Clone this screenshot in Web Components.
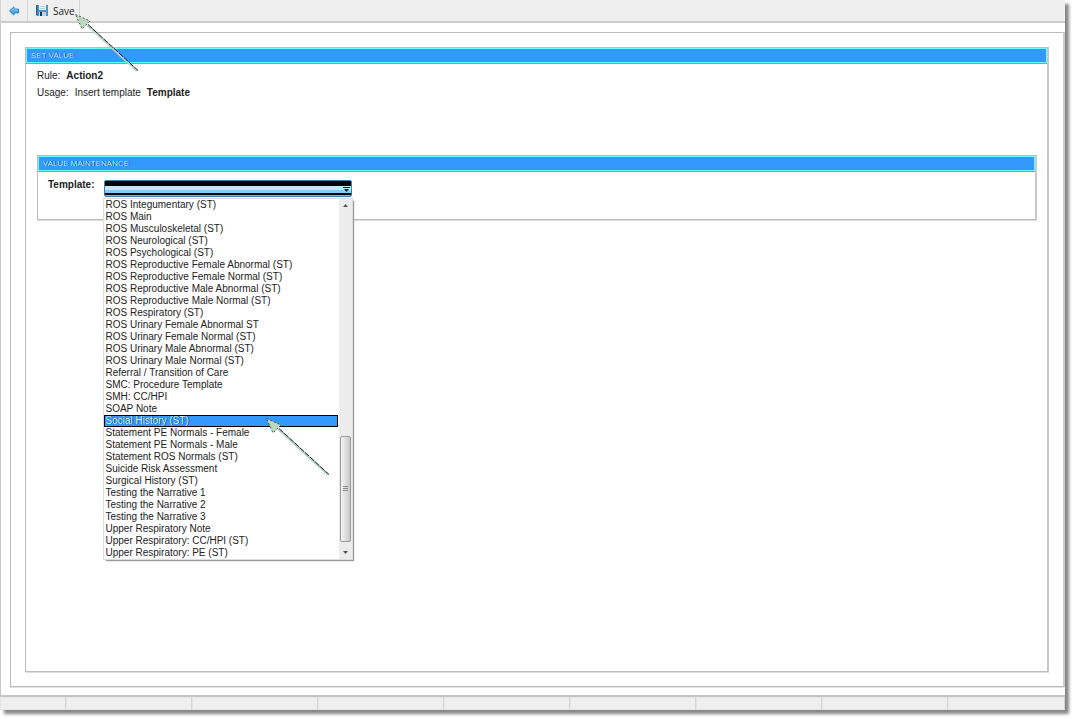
<!DOCTYPE html>
<html lang="en">
<head>
  <meta charset="utf-8">
  <title>Set Value</title>
  <style>
    html,
    body {
      height: 100%;
      margin: 0;
    }

    body {
      box-sizing: border-box;
      padding: 0 9px 9px 0;
      background: #fff;
      color: #222;
      font: 10px/12px "Liberation Sans", Arial, sans-serif;
      overflow: hidden;
    }

    .info {
      margin: 0;
      padding: 4px 11px 0;
      line-height: 17px;
    }

    .info div {
      display: flex;
      gap: 6px;
    }

    .info dt,
    .info dd {
      margin: 0;
    }

    .value-panel {
      margin: 54px 10px 0 11px;
    }
  </style>
</head>
<body>
  <app-window>
    <tool-bar slot="toolbar"></tool-bar>
    <title-panel heading="SET VALUE" fill>
      <dl class="info">
        <div><dt>Rule:</dt><dd><b>Action2</b></dd></div>
        <div><dt>Usage:</dt><dd>Insert template</dd><dd><b>Template</b></dd></div>
      </dl>
      <title-panel class="value-panel" heading="VALUE MAINTENANCE">
        <template-picker label="Template:" value="Social History (ST)"></template-picker>
      </title-panel>
    </title-panel>
    <status-bar slot="status" cells="9"></status-bar>
  </app-window>

  <script>
    // window frame: toolbar on top, bordered page, status bar
    customElements.define(
      'app-window',
      class extends HTMLElement {
        constructor() {
          super();
          const shadowRoot = this.attachShadow({ mode: 'open' });
          shadowRoot.innerHTML = `
            <style>
              :host {
                box-sizing: border-box;
                display: flex;
                flex-direction: column;
                height: 100%;
                background: #fff;
                box-shadow: 4px 4px 3px 0 #888;
              }

              main {
                flex: 1;
                display: flex;
                padding: 9px 0 8px 9px;
                border-left: 1px solid #c8c8c8;
                border-bottom: 2px solid #c4c4c4;
              }

              .page {
                flex: 1;
                display: flex;
                padding: 14px;
                border: 1px solid #bbb;
                border-right: 2px solid #ccc;
                box-shadow: 0 1px #e2e2e2;
              }
            </style>
            <slot name="toolbar"></slot>
            <main><div class="page"><slot></slot></div></main>
            <slot name="status"></slot>
          `;
        }
      }
    );

    customElements.define(
      'tool-bar',
      class extends HTMLElement {
        constructor() {
          super();
          const shadowRoot = this.attachShadow({ mode: 'open' });
          shadowRoot.innerHTML = `
            <style>
              :host {
                display: flex;
                height: 21px;
                background: #efefef;
                border-left: 1px solid #d4d4d4;
                border-bottom: 2px solid #ccc;
              }

              button {
                display: flex;
                align-items: center;
                gap: 5px;
                margin: 0;
                padding: 0 8px;
                border: 0;
                border-right: 1px solid #d4d4d4;
                background: none;
                color: #222;
                font: 10px/12px "Open Sans", sans-serif;
              }

              .save {
                position: relative;
                padding: 0 4px 0 8px;
              }

              pointer-arrow {
                left: 47px;
                top: 14px;
              }
            </style>
            <button type="button" aria-label="Back">
              <svg width="10" height="10" viewBox="0 0 10 10">
                <path d="M0.5 5L5 0.8V3H9.5V7H5V9.2Z" fill="#45a8ea" stroke="#2179bd" stroke-width="0.8"/>
                <path d="M2.5 4.5L4.5 3V4H8.5" fill="none" stroke="#a5dcfb" stroke-width="0.8"/>
              </svg>
            </button>
            <button type="button" class="save">
              <svg width="12" height="11" viewBox="0 0 12 11">
                <path d="M0 0H12V11H1L0 10Z" fill="#4d94cc"/>
                <path d="M0 0H1.5V10H0Z" fill="#2c5f8c"/>
                <path d="M3 0H10V5H3Z" fill="#eef6f4"/>
                <path d="M4 1.5H9M4 3.5H9" stroke="#a9cbb9" stroke-width="0.8"/>
                <path d="M3 7H10V11H3Z" fill="#c9d4df"/>
                <path d="M4 7H6V11H4Z" fill="#183652"/>
              </svg>
              Save
              <pointer-arrow></pointer-arrow>
            </button>
          `;
        }
      }
    );

    // callout arrow, its tip sits at the host's top left corner
    customElements.define(
      'pointer-arrow',
      class extends HTMLElement {
        constructor() {
          super();
          const shadowRoot = this.attachShadow({ mode: 'open' });
          shadowRoot.innerHTML = `
            <style>
              :host {
                position: absolute;
                z-index: 2;
                pointer-events: none;
              }

              svg {
                display: block;
              }
            </style>
            <svg width="64" height="58" viewBox="0 0 64 58" aria-hidden="true">
              <path d="M12 11L62 57" stroke="#b5d5cf" stroke-width="2"/>
              <path d="M13 10.5L63 56.5" stroke="#111" stroke-width="1" stroke-dasharray="6 1"/>
              <path d="M0.5 0.5L15 7L7 15Z" fill="#bcd8bc"/>
              <path d="M0.5 0.5L15 7L7 15Z" fill="none" stroke="#333" stroke-width="0.8" stroke-dasharray="2 2"/>
            </svg>
          `;
        }
      }
    );

    customElements.define(
      'title-panel',
      class extends HTMLElement {
        constructor() {
          super();
          const shadowRoot = this.attachShadow({ mode: 'open' });
          shadowRoot.innerHTML = `
            <style>
              :host {
                display: block;
                box-sizing: border-box;
                border: 1px solid #bbb;
                border-right: 2px solid #c8c8c8;
                box-shadow: 0 1px #ddd;
              }

              :host([fill]) {
                flex: 1;
              }

              h2 {
                margin: 0;
                padding: 0 4px;
                border: 1px solid #66ffff;
                background: #3399ff;
                box-shadow: 0 1px #7f9fc0;
                color: #b8f4ff;
                font-size: 8px;
                font-weight: normal;
                line-height: 13px;
                text-shadow: 1px 0 #0d3c66;
              }
            </style>
            <h2></h2>
            <slot></slot>
          `;
          shadowRoot.querySelector('h2').textContent = this.getAttribute('heading');
        }
      }
    );

    const TEMPLATES = [
      'ROS Integumentary (ST)',
      'ROS Main',
      'ROS Musculoskeletal (ST)',
      'ROS Neurological (ST)',
      'ROS Psychological (ST)',
      'ROS Reproductive Female Abnormal (ST)',
      'ROS Reproductive Female Normal (ST)',
      'ROS Reproductive Male Abnormal (ST)',
      'ROS Reproductive Male Normal (ST)',
      'ROS Respiratory (ST)',
      'ROS Urinary Female Abnormal ST',
      'ROS Urinary Female Normal (ST)',
      'ROS Urinary Male Abnormal (ST)',
      'ROS Urinary Male Normal (ST)',
      'Referral / Transition of Care',
      'SMC: Procedure Template',
      'SMH: CC/HPI',
      'SOAP Note',
      'Social History (ST)',
      'Statement PE Normals - Female',
      'Statement PE Normals - Male',
      'Statement ROS Normals (ST)',
      'Suicide Risk Assessment',
      'Surgical History (ST)',
      'Testing the Narrative 1',
      'Testing the Narrative 2',
      'Testing the Narrative 3',
      'Upper Respiratory Note',
      'Upper Respiratory: CC/HPI (ST)',
      'Upper Respiratory: PE (ST)'
    ];

    customElements.define(
      'template-picker',
      class extends HTMLElement {
        constructor() {
          super();
          const shadowRoot = this.attachShadow({ mode: 'open' });
          shadowRoot.innerHTML = `
            <style>
              :host {
                display: flex;
                gap: 9px;
                padding: 8px 10px 22px;
              }

              label {
                font-weight: bold;
                line-height: 12px;
              }

              .field {
                position: relative;
                width: 248px;
                margin-top: 1px;
              }

              .combo {
                position: relative;
                display: block;
              }

              select {
                display: block;
                box-sizing: border-box;
                width: 100%;
                height: 17px;
                margin: 0;
                padding: 0;
                appearance: none;
                border: 1px solid #3c7fb1;
                border-radius: 2px;
                outline: 0;
                background: linear-gradient(#000 5px, #c4e9ff 5px 9px, #8cc8fb 9px 12px, #000 12px 14px, #66bfff 14px);
              }

              .combo svg {
                position: absolute;
                right: 2px;
                top: 7px;
              }

              .popup {
                position: absolute;
                z-index: 1;
                top: 19px;
                left: 0;
                right: 0;
                display: flex;
                background: #fff;
                box-shadow: 0 0 0 1px #ddd, 2px 2px 1px #999;
              }

              ul {
                flex: 1;
                margin: 0;
                padding: 0 1px 0 0;
                list-style: none;
              }

              li {
                padding: 0 2px;
                line-height: 12px;
                white-space: nowrap;
              }

              li[aria-selected="true"] {
                background: #3399ff;
                box-shadow: inset 0 0 0 1px #000;
                color: #d4f3ff;
                text-shadow: 1px 0 #123d66;
              }

              .scroll {
                display: flex;
                flex-direction: column;
                align-items: center;
                width: 13px;
                background: #ececec;
              }

              .scroll svg {
                display: block;
                padding: 5px 0;
              }

              .thumb {
                box-sizing: border-box;
                display: grid;
                place-items: center;
                width: 11px;
                height: 106px;
                margin: auto 0 4px;
                border: 1px solid #999;
                border-radius: 2px;
                background: linear-gradient(90deg, #f5f5f5, #dedede 50%, #c8c8c8);
              }

              pointer-arrow {
                left: 162px;
                top: 219px;
              }
            </style>
            <label for="template"></label>
            <div class="field">
              <div class="combo">
                <select id="template"><option></option></select>
                <svg width="7" height="6" viewBox="0 0 7 6"><path d="M0 0H7V1H0ZM1 2H6L3.5 5Z" fill="#123"/></svg>
              </div>
              <div class="popup">
                <ul role="listbox"></ul>
                <div class="scroll">
                  <svg width="5" height="3" viewBox="0 0 5 3"><path d="M0 3L2.5 0L5 3Z" fill="#555"/></svg>
                  <div class="thumb">
                    <svg width="5" height="6" viewBox="0 0 5 6"><path d="M0 .5H5M0 2.5H5M0 4.5H5" stroke="#888"/></svg>
                  </div>
                  <svg width="5" height="3" viewBox="0 0 5 3"><path d="M0 0L2.5 3L5 0Z" fill="#555"/></svg>
                </div>
                <pointer-arrow></pointer-arrow>
              </div>
            </div>
          `;
          shadowRoot.querySelector('label').textContent = this.getAttribute('label');
          const list = shadowRoot.querySelector('ul');
          list.setAttribute('aria-label', 'Templates');
          TEMPLATES.forEach(name => {
            const item = document.createElement('li');
            item.textContent = name;
            item.setAttribute('role', 'option');
            item.setAttribute('aria-selected', name === this.getAttribute('value'));
            list.appendChild(item);
          });
        }
      }
    );

    customElements.define(
      'status-bar',
      class extends HTMLElement {
        constructor() {
          super();
          const shadowRoot = this.attachShadow({ mode: 'open' });
          shadowRoot.innerHTML = `
            <style>
              :host {
                display: grid;
                grid-template-columns: 66px repeat(7, 126px) 1fr;
                height: 13px;
                background: #efefef;
              }

              span {
                border: 1px solid #e6e6e6;
                border-right-color: #d4d4d4;
              }
            </style>
          `;
          for (let i = 0; i < Number(this.getAttribute('cells')); i++) {
            shadowRoot.appendChild(document.createElement('span'));
          }
        }
      }
    );
  </script>
</body>
</html>
